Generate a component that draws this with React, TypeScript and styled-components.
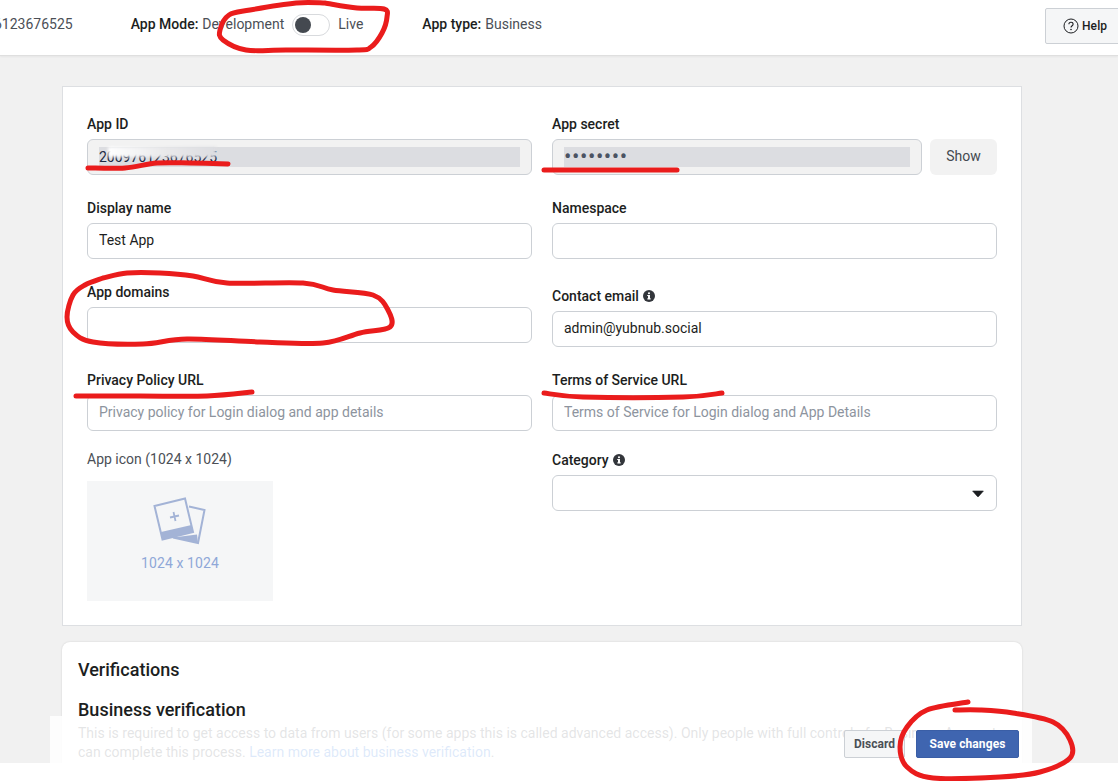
import React from "react";
import styled, { createGlobalStyle } from "styled-components";

const Global = createGlobalStyle`
  html, body { margin: 0; padding: 0; background: #fff; }
  body { font-family: Roboto, "Liberation Sans", sans-serif; color: #1c1e21; overflow: hidden; }
  * { box-sizing: border-box; }
`;

const Shell = styled.div`
  position: relative;
  width: 1118px;
  height: 781px;
  overflow: hidden;
  background: #fff;
`;
const Main = styled.div`
  position: relative;
  height: 763px;
  overflow: hidden;
  background: #f1f1f1;
  display: flex;
  flex-direction: column;
`;
const Header = styled.header`
  flex: none;
  height: 56px;
  background: #fff;
  border-bottom: 1px solid #dfdfdf;
  box-shadow: 0 1px 2px rgba(0, 0, 0, 0.05);
  display: flex;
  align-items: flex-start;
  font-size: 14px;
  color: #4b4f56;
`;
const HeaderItem = styled.div<{ $left: number }>`
  margin-left: ${(p) => p.$left}px;
  height: 48px;
  display: flex;
  align-items: center;
  white-space: nowrap;
  flex: none;
`;
const Strong = styled.b`
  font-weight: 500;
  color: #1c1e21;
  margin-right: 4px;
`;
const Toggle = styled.span`
  flex: none;
  width: 38px;
  height: 22px;
  margin: 2px 8px 0;
  border: 1px solid #d8dadd;
  border-radius: 11px;
  background: #fff;
  padding: 2px;
  display: flex;
  align-items: center;
`;
const Knob = styled.span`
  width: 16px;
  height: 16px;
  border-radius: 50%;
  background: #444950;
`;
const HelpButton = styled.button`
  flex: none;
  margin: 8px -11px 0 auto;
  width: 84px;
  height: 36px;
  padding: 0 0 0 17px;
  background: #f5f6f7;
  border: 1px solid #ccd0d5;
  border-radius: 2px;
  display: flex;
  align-items: center;
  gap: 3px;
  font: 500 12px Roboto, sans-serif;
  letter-spacing: 0.1px;
  color: #1c1e21;
`;
const Content = styled.div`
  flex: 1;
  padding: 30px 96px 0 62px;
  display: flex;
  flex-direction: column;
  gap: 16px;
`;
const FormCard = styled.section`
  flex: none;
  height: 540px;
  background: #fff;
  border: 1px solid #dddfe2;
  padding: 29px 24px 0;
  display: grid;
  grid-template-columns: 445px 445px;
  column-gap: 20px;
`;
const Column = styled.div`
  display: flex;
  flex-direction: column;
`;
const Field = styled.div<{ $top?: number }>`
  margin-top: ${(p) => p.$top ?? 0}px;
`;
const Label = styled.label<{ $plain?: boolean }>`
  display: flex;
  align-items: center;
  gap: 4px;
  height: 16px;
  margin-bottom: 7px;
  font-size: 14px;
  font-weight: ${(p) => (p.$plain ? 400 : 500)};
  color: ${(p) => (p.$plain ? "#4b4f56" : "#1c1e21")};
`;
const Input = styled.input`
  display: block;
  width: 100%;
  height: 36px;
  border: 1px solid #ccd0d5;
  border-radius: 6px;
  background: #fff;
  padding: 0 11px 2px;
  font: 400 14px Roboto, sans-serif;
  color: #1c1e21;
  outline: none;
  &::placeholder { color: #8d949e; opacity: 1; }
`;
const Row = styled.div`
  display: flex;
  gap: 8px;
`;
const LockedBox = styled.div`
  position: relative;
  flex: 1;
  height: 36px;
  border: 1px solid #ccd0d5;
  border-radius: 6px;
  background: #f2f2f2;
  padding: 7px 11px;
`;
const Selection = styled.div`
  height: 20px;
  background: #dcdde1;
  font-size: 14px;
  line-height: 20px;
  color: #1d2a44;
  white-space: nowrap;
`;
const SecretDots = styled(Selection)`
  color: #4b5363;
  font-size: 22px;
  letter-spacing: 0.55px;
`;
const Smudge = styled.span`
  position: absolute;
  left: 20px;
  top: 7px;
  width: 108px;
  height: 10px;
  background: linear-gradient(90deg, #ffffff 0%, #e8e8ea 55%, #dcdde1 100%);
  filter: blur(1.5px);
`;
const ShowButton = styled.button`
  flex: none;
  width: 67px;
  height: 36px;
  padding: 0 0 2px;
  border: none;
  border-radius: 6px;
  background: #f2f2f2;
  font: 400 14px Roboto, sans-serif;
  color: #444950;
`;
const IconDrop = styled.div`
  width: 186px;
  height: 120px;
  margin-top: 14px;
  background: #f5f6f7;
  display: flex;
  flex-direction: column;
  align-items: center;
  padding-top: 16px;
  color: #8fa8d8;
  font-size: 14px;
  letter-spacing: 0.1px;
`;
const IconCaption = styled.span`
  margin-top: 10px;
`;
const SelectBox = styled.div`
  height: 36px;
  border: 1px solid #ccd0d5;
  border-radius: 6px;
  background: #fff;
  display: flex;
  align-items: center;
  justify-content: flex-end;
  padding-right: 12px;
`;
const InfoCard = styled.section`
  flex: none;
  height: 200px;
  background: #fff;
  border-radius: 8px;
  box-shadow: 0 0 2px rgba(0, 0, 0, 0.15);
  padding: 17px 16px;
`;
const CardTitle = styled.h2`
  margin: 0;
  font-size: 18px;
  line-height: 22px;
  font-weight: 500;
  color: #1c1e21;
`;
const SubTitle = styled.h3`
  margin: 18px 0 0;
  font-size: 18px;
  line-height: 22px;
  font-weight: 500;
  color: #1c1e21;
`;
const Body = styled.p`
  margin: 3px 0 0;
  width: 925px;
  font-size: 14px;
  line-height: 19px;
  color: #4b4f56;
`;
const Link = styled.a`
  color: #216fdb;
`;
const ActionBar = styled.div`
  position: absolute;
  left: 50px;
  top: 716px;
  width: 982px;
  height: 47px;
  background: rgba(255, 255, 255, 0.85);
  display: flex;
  align-items: flex-start;
  justify-content: flex-end;
  gap: 11px;
  padding: 14px 13px 0 0;
`;
const Discard = styled.button`
  width: 61px;
  height: 28px;
  padding: 0;
  background: #f5f6f7;
  border: 1px solid #ccd0d5;
  border-radius: 2px;
  font: 700 12px Roboto, sans-serif;
  color: #4b4f56;
`;
const Save = styled.button`
  width: 103px;
  height: 28px;
  padding: 0;
  background: #3f65b0;
  border: 1px solid #3a5ea6;
  border-radius: 2px;
  font: 700 12px Roboto, sans-serif;
  letter-spacing: 0.1px;
  color: #fff;
`;
const Ink = styled.svg`
  position: absolute;
  left: 0;
  top: 0;
  width: 1118px;
  height: 781px;
  pointer-events: none;
`;

const InfoIcon = () => (
  <svg width="12" height="12" viewBox="0 0 12 12" aria-hidden="true">
    <circle cx="6" cy="6" r="6" fill="#33363b" />
    <rect x="5" y="5" width="2" height="4.2" fill="#fff" />
    <rect x="4.2" y="5" width="1.6" height="1" fill="#fff" />
    <rect x="4.2" y="8.4" width="3.6" height="1" fill="#fff" />
    <circle cx="6" cy="3.3" r="1.05" fill="#fff" />
  </svg>
);
const HelpIcon = () => (
  <svg width="16" height="16" viewBox="0 0 16 16" aria-hidden="true">
    <circle cx="8" cy="8" r="7" fill="none" stroke="#1c1e21" strokeWidth="1" />
    <path d="M5.9 6.3c0-1.2 1-2 2.1-2s2.1.8 2.1 1.9c0 1.5-2.1 1.6-2.1 3.4" fill="none" stroke="#1c1e21" strokeWidth="1.1" />
    <circle cx="8" cy="11.5" r="0.8" fill="#1c1e21" />
  </svg>
);
const PhotosIcon = () => (
  <svg width="54" height="48" viewBox="0 0 54 48" aria-hidden="true">
    <path d="M36 9.5L51.5 13 45 46 20 40.5" fill="none" stroke="#a3b3d6" strokeWidth="2" />
    <path d="M20 40.500L44 37.500 45 46Z" fill="#a3b3d6" />
    <path d="M1.500 9L32 1.500 40 35 9.500 42.500Z" fill="#f5f6f7" stroke="#a3b3d6" strokeWidth="2" />
    <path d="M8 35L38.500 28 40 35 9.500 42.500Z" fill="#a3b3d6" />
    <path d="M20.500 15L22.500 24M17 20.500L26 18.500" fill="none" stroke="#a3b3d6" strokeWidth="1.800" />
  </svg>
);
const Caret = () => (
  <svg width="12" height="7" viewBox="0 0 12 7" aria-hidden="true">
    <path d="M.6 1h10.800L6.800 6.200a1 1 0 0 1-1.600 0Z" fill="#1c1e21" stroke="#1c1e21" strokeWidth=".6" strokeLinejoin="round" />
  </svg>
);

const smooth = (pts: number[][]): string => {
  const at = (i: number) => pts[Math.max(0, Math.min(pts.length - 1, i))];
  let d = `M${pts[0][0]} ${pts[0][1]}`;
  for (let i = 0; i < pts.length - 1; i++) {
    const [p0, p1, p2, p3] = [at(i - 1), at(i), at(i + 1), at(i + 2)];
    d += ` C${(p1[0] + (p2[0] - p0[0]) / 6).toFixed(1)} ${(p1[1] + (p2[1] - p0[1]) / 6).toFixed(1)} ${(p2[0] - (p3[0] - p1[0]) / 6).toFixed(1)} ${(p2[1] - (p3[1] - p1[1]) / 6).toFixed(1)} ${p2[0]} ${p2[1]}`;
  }
  return d;
};

const strokes: number[][][] = [
  [[325,3],[357,8],[384,9],[387,17],[382,33],[371,47],[357,50],[286,50],[246,50],[223,40],[220,30],[229,15],[250,10],[296,3],[325,3]],
  [[88,168],[125,168],[157,163],[190,163],[228,164]],
  [[544,170],[600,170],[677,170]],
  [[103,278],[127,273],[160,273],[193,276],[227,283],[303,283],[333,290],[373,295],[388,310],[390,327],[360,333],[323,343],[260,342],[187,339],[143,344],[93,342],[73,332],[67,317],[73,295],[85,285],[103,278]],
  [[76,396],[140,396],[207,396],[252,392]],
  [[544,393],[583,397],[683,397],[722,393]],
  [[968,702],[927,710],[907,727],[900,747],[907,767],[933,778],[1000,777],[1040,772],[1070,758],[1070,740],[1053,722],[1013,713],[980,710],[955,710]],
];

export default function App() {
  return (
    <Shell>
      <Global />
      <Main>
        <Header>
          <HeaderItem $left={-6}>6123676525</HeaderItem>
          <HeaderItem $left={58}>
            <Strong>App Mode:</Strong>Development
            <Toggle><Knob /></Toggle>Live
          </HeaderItem>
          <HeaderItem $left={59}>
            <Strong>App type:</Strong>Business
          </HeaderItem>
          <HelpButton><HelpIcon />Help</HelpButton>
        </Header>
        <Content>
          <FormCard>
            <Column>
              <Field>
                <Label>App ID</Label>
                <LockedBox>
                  <Selection>200976123676525</Selection>
                  <Smudge />
                </LockedBox>
              </Field>
              <Field $top={25}>
                <Label>Display name</Label>
                <Input readOnly value="Test App" />
              </Field>
              <Field $top={25}>
                <Label>App domains</Label>
                <Input readOnly />
              </Field>
              <Field $top={29}>
                <Label>Privacy Policy URL</Label>
                <Input readOnly placeholder="Privacy policy for Login dialog and app details" />
              </Field>
              <Field $top={20}>
                <Label $plain>App icon (1024 x 1024)</Label>
                <IconDrop>
                  <PhotosIcon />
                  <IconCaption>1024 x 1024</IconCaption>
                </IconDrop>
              </Field>
            </Column>
            <Column>
              <Field>
                <Label>App secret</Label>
                <Row>
                  <LockedBox>
                    <SecretDots>••••••••</SecretDots>
                  </LockedBox>
                  <ShowButton>Show</ShowButton>
                </Row>
              </Field>
              <Field $top={25}>
                <Label>Namespace</Label>
                <Input readOnly />
              </Field>
              <Field $top={29}>
                <Label>Contact email <InfoIcon /></Label>
                <Input readOnly value="admin@yubnub.social" />
              </Field>
              <Field $top={25}>
                <Label>Terms of Service URL</Label>
                <Input readOnly placeholder="Terms of Service for Login dialog and App Details" />
              </Field>
              <Field $top={21}>
                <Label>Category <InfoIcon /></Label>
                <SelectBox><Caret /></SelectBox>
              </Field>
            </Column>
          </FormCard>
          <InfoCard>
            <CardTitle>Verifications</CardTitle>
            <SubTitle>Business verification</SubTitle>
            <Body>
              This is required to get access to data from users (for some apps this is called advanced access). Only people with full control of a Business Account can complete this process. <Link>Learn more about business verification</Link>.
            </Body>
          </InfoCard>
        </Content>
        <ActionBar>
          <Discard>Discard</Discard>
          <Save>Save changes</Save>
        </ActionBar>
      </Main>
      <Ink viewBox="0 0 1118 781" aria-hidden="true">
        {strokes.map((pts, i) => (
          <path key={i} d={smooth(pts)} fill="none" stroke="#ea1c1c" strokeWidth="5" strokeLinecap="round" strokeLinejoin="round" />
        ))}
      </Ink>
    </Shell>
  );
}
